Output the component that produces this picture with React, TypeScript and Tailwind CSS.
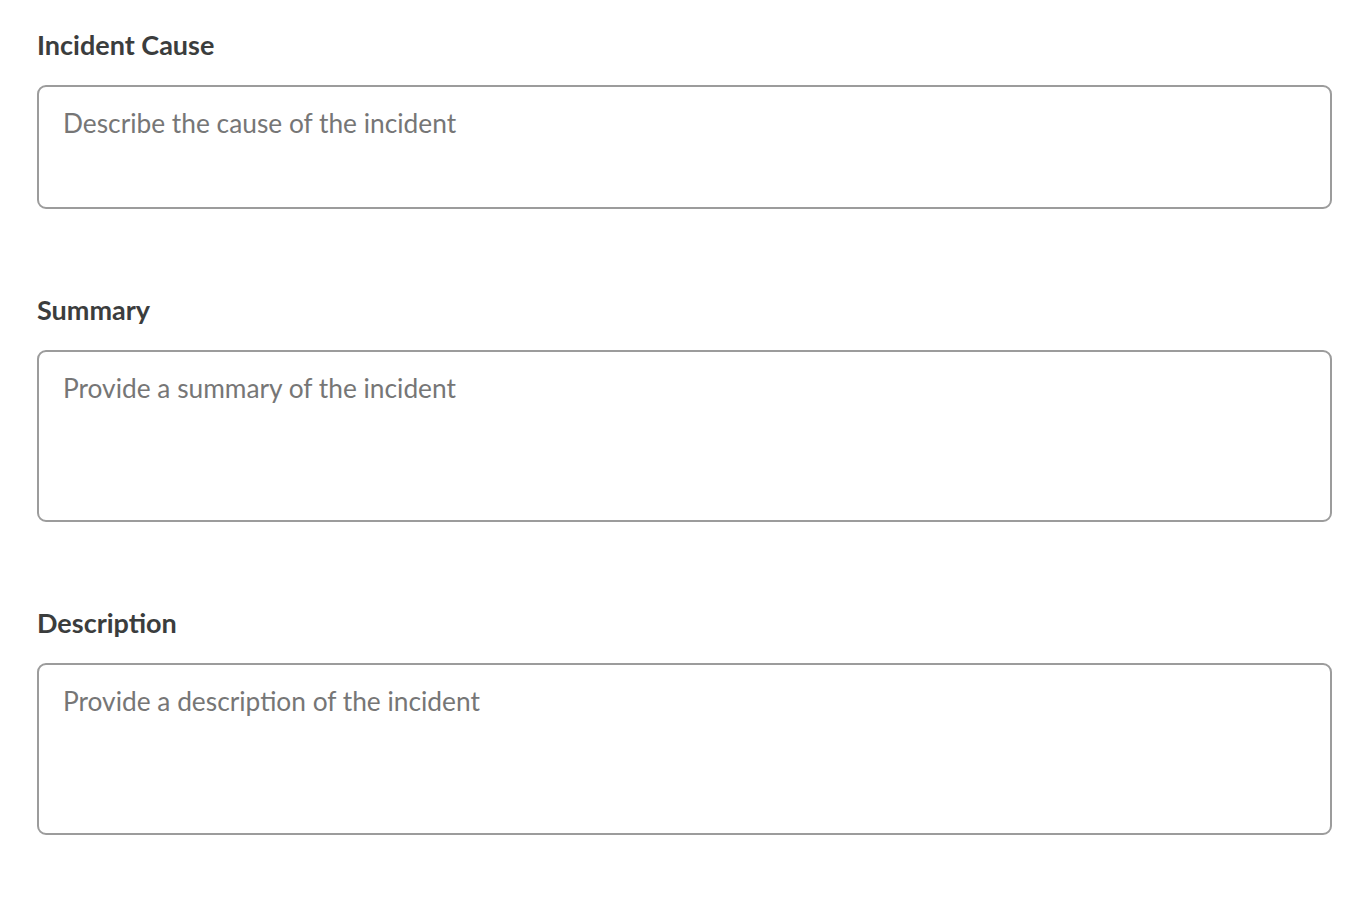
import React from 'react';

interface FieldProps {
  label: string;
  placeholder: string;
  height: string;
}

const Field: React.FC<FieldProps> = ({ label, placeholder, height }) => (
  <div className="flex flex-col">
    <label className="text-[27px] leading-[32px] font-bold text-[#3b3d3d] mb-[24px]">{label}</label>
    <textarea
      placeholder={placeholder}
      className={`${height} block w-full resize-none rounded-[9px] border-2 border-[#9c9c9c] bg-white px-6 pt-[18px] text-[26.3px] leading-[36px] text-[#3b3d3d] placeholder:text-[#767676] outline-none`}
    />
  </div>
);

export default function App() {
  return (
    <div className="min-h-screen bg-white px-[37px] pt-[29px] font-['Lato',sans-serif]">
      <div className="flex flex-col gap-[85px] w-[1295px]">
        <Field label="Incident Cause" placeholder="Describe the cause of the incident" height="h-[124px]" />
        <Field label="Summary" placeholder="Provide a summary of the incident" height="h-[172px]" />
        <Field label="Description" placeholder="Provide a description of the incident" height="h-[172px]" />
      </div>
    </div>
  );
}
